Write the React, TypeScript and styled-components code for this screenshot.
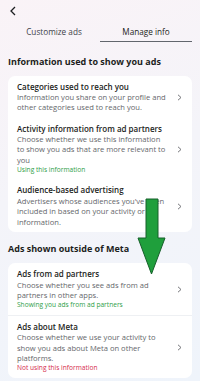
import styled, { createGlobalStyle } from 'styled-components';

const GlobalStyle = createGlobalStyle`
  body {
    margin: 0;
    font-family: "Open Sans", "Liberation Sans", sans-serif;
  }
`;

const Page = styled.div`
  position: relative;
  width: 200px;
  height: 381px;
  overflow: hidden;
  background: linear-gradient(160deg, #faf3f7 0%, #f4f4f9 45%, #eff4fb 100%);
  color: #1c1e21;
`;

const TopBar = styled.div`
  height: 22px;
  display: flex;
  align-items: center;
  padding-left: 9px;
`;

const Tabs = styled.div`
  display: flex;
  padding: 0 8px;
  margin: 1px 0 2px;
`;

const Tab = styled.div<{ $active?: boolean }>`
  flex: 1;
  text-align: center;
  font-size: 8.2px;
  line-height: 18px;
  color: ${p => (p.$active ? '#1c1e21' : '#3e4249')};
  border-bottom: 1.5px solid ${p => (p.$active ? '#62666d' : 'transparent')};
`;

const SectionTitle = styled.h2`
  margin: 0;
  padding: 12.5px 8px 9px;
  font-size: 9px;
  line-height: 10px;
  font-weight: 700;
`;

const Card = styled.div`
  margin: 0 8px;
  background: #ffffff;
  border-radius: 7px;
  overflow: hidden;
`;

const Item = styled.div<{ $divider?: boolean }>`
  display: flex;
  align-items: center;
  padding: 6px 10px 5px 9px;
  border-top: ${p => (p.$divider ? '1px solid #eef0f3' : 'none')};
`;

const ItemBody = styled.div`
  flex: 1;
  min-width: 0;
`;

const ItemTitle = styled.div`
  font-size: 8px;
  line-height: 10.5px;
  font-weight: 600;
  color: #1c1e21;
`;

const ItemText = styled.div`
  font-size: 7.6px;
  line-height: 10.3px;
  color: #65676b;
  padding-right: 4px;
`;

const Status = styled.div<{ $tone: 'good' | 'bad' }>`
  font-size: 6.6px;
  line-height: 9.5px;
  color: ${p => (p.$tone === 'good' ? '#2e9e48' : '#d52a4c')};
`;

const Chevron = styled.svg`
  flex: none;
  width: 5px;
  height: 7px;
  margin-left: 4px;
`;

const Arrow = styled.svg`
  position: absolute;
  left: 135px;
  top: 198px;
  width: 32px;
  height: 78px;
`;

type Row = {
  title: string;
  text: string;
  status?: { tone: 'good' | 'bad'; label: string };
};

const firstRows: Row[] = [
  {
    title: 'Categories used to reach you',
    text: 'Information you share on your profile and other categories used to reach you.',
  },
  {
    title: 'Activity information from ad partners',
    text: 'Choose whether we use this information to show you ads that are more relevant to you',
    status: { tone: 'good', label: 'Using this information' },
  },
  {
    title: 'Audience-based advertising',
    text: "Advertisers whose audiences you've been included in based on your activity or information.",
  },
];

const secondRows: Row[] = [
  {
    title: 'Ads from ad partners',
    text: 'Choose whether you see ads from ad partners in other apps.',
    status: { tone: 'good', label: 'Showing you ads from ad partners' },
  },
  {
    title: 'Ads about Meta',
    text: 'Choose whether we use your activity to show you ads about Meta on other platforms.',
    status: { tone: 'bad', label: 'Not using this information' },
  },
];

function RowList({ rows, dividers }: { rows: Row[]; dividers?: boolean }) {
  return (
    <Card>
      {rows.map((row, i) => (
        <Item key={row.title} $divider={dividers && i > 0}>
          <ItemBody>
            <ItemTitle>{row.title}</ItemTitle>
            <ItemText>{row.text}</ItemText>
            {row.status && <Status $tone={row.status.tone}>{row.status.label}</Status>}
          </ItemBody>
          <Chevron viewBox="0 0 5 7">
            <path d="M1 0.8 L4 3.5 L1 6.2" fill="none" stroke="#65676b" strokeWidth="0.9" />
          </Chevron>
        </Item>
      ))}
    </Card>
  );
}

export default function App() {
  return (
    <>
      <GlobalStyle />
      <Page>
        <TopBar>
          <svg width="8" height="10" viewBox="0 0 8 10">
            <path d="M6 1 L2 5 L6 9" fill="none" stroke="#1c1e21" strokeWidth="1.3" />
          </svg>
        </TopBar>
        <Tabs>
          <Tab>Customize ads</Tab>
          <Tab $active>Manage info</Tab>
        </Tabs>
        <SectionTitle>Information used to show you ads</SectionTitle>
        <RowList rows={firstRows} />
        <SectionTitle>Ads shown outside of Meta</SectionTitle>
        <RowList rows={secondRows} dividers />
        <Arrow viewBox="0 0 32 78">
          <path
            d="M11 1 H23 V40 H30 L16.5 76 L3 40 H11 Z"
            fill="#1f9f3c"
            stroke="#16602a"
            strokeWidth="1"
          />
        </Arrow>
      </Page>
    </>
  );
}
